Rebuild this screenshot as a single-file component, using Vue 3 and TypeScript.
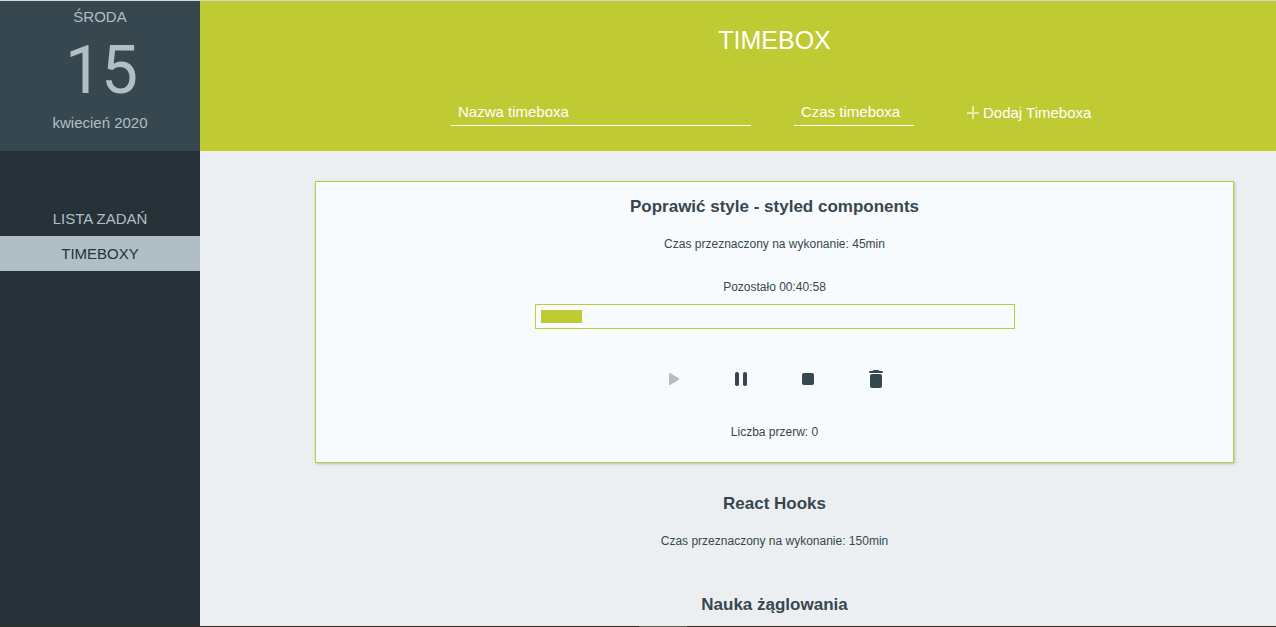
<script setup lang="ts">
interface Timebox {
  title: string
  minutes: number
}

const current: Timebox = { title: 'Poprawić style - styled components', minutes: 45 }
const next: Timebox = { title: 'React Hooks', minutes: 150 }
const later = 'Nauka żąglowania'
const progress = 8.77
</script>

<template>
  <div class="app">
    <div class="body">
      <aside class="sidebar">
        <div class="date">
          <div class="weekday">ŚRODA</div>
          <div class="day">15</div>
          <div class="month">kwiecień 2020</div>
        </div>
        <nav class="menu">
          <a class="item">LISTA ZADAŃ</a>
          <a class="item active">TIMEBOXY</a>
        </nav>
      </aside>
      <main class="main">
        <header class="header">
          <h1>TIMEBOX</h1>
          <form class="form" @submit.prevent>
            <input class="name" placeholder="Nazwa timeboxa" />
            <input class="time" placeholder="Czas timeboxa" />
            <button class="add">
              <svg width="13" height="13" viewBox="0 0 13 13"><path d="M6 0H8V6H13V8H8V13H6V8H1V6H6Z" fill="#fff" fill-opacity=".6" /></svg>
              Dodaj Timeboxa
            </button>
          </form>
        </header>
        <section class="card current">
          <h2>{{ current.title }}</h2>
          <p class="planned">Czas przeznaczony na wykonanie: {{ current.minutes }}min</p>
          <p class="left">Pozostało 00:40:58</p>
          <div class="bar"><div class="fill" :style="{ width: progress + '%' }"></div></div>
          <div class="controls">
            <svg class="off" viewBox="0 0 24 24"><path d="M8 6.800v10.400q0 1.200 1 .7l8.800-5.200q.9-.7 0-1.400L9 6.100Q8 5.600 8 6.800Z" /></svg>
            <svg viewBox="0 0 24 24"><rect x="6" y="5" width="4" height="14" rx="1.800" /><rect x="14" y="5" width="4" height="14" rx="1.800" /></svg>
            <svg viewBox="0 0 24 24"><rect x="6" y="6" width="12" height="12" rx="2" /></svg>
            <svg viewBox="0 0 24 24"><path d="M6 19c0 1.100.9 2 2 2h8c1.100 0 2-.9 2-2V9c0-1.100-.9-2-2-2H8c-1.100 0-2 .9-2 2ZM18 4h-2.500l-.7-.7Q14.500 3 14 3H10q-.5 0-.8.3L8.500 4H6c-1.300 0-1.300 2 0 2h12c1.300 0 1.300-2 0-2Z" /></svg>
          </div>
          <p class="breaks">Liczba przerw: 0</p>
        </section>
        <section class="card">
          <h2>{{ next.title }}</h2>
          <p class="planned">Czas przeznaczony na wykonanie: {{ next.minutes }}min</p>
        </section>
        <section class="card last">
          <h2>{{ later }}</h2>
        </section>
      </main>
    </div>
    <div class="edge"><div class="thumb"></div></div>
  </div>
</template>

<style>
body { margin: 0; overflow: hidden; }
</style>

<style scoped>
* { box-sizing: border-box; }
.app {
  height: 627px;
  border-top: 1px solid #d3d9db;
  background: #eceff1;
  color: #37474f;
  font-family: "Liberation Sans", Arial, sans-serif;
}
.body { display: flex; height: 625px; }
.edge { height: 1px; padding-left: 639px; background: #302b26; }
.thumb { width: 48px; height: 1px; background: #5c5c58; }
.sidebar { width: 200px; background: #263238; color: #b0bec5; text-align: center; }
.date { height: 150px; background: #37474f; }
.weekday { height: 32px; font-size: 15px; line-height: 31px; }
.day { height: 72px; padding-left: 2px; font-family: Roboto, sans-serif; font-size: 66px; letter-spacing: -1px; line-height: 76px; }
.month { font-size: 15px; line-height: 36px; }
.menu { padding-top: 50px; }
.item { display: block; height: 35px; font-size: 15px; line-height: 35px; }
.active { background: #b0bec5; color: #263238; }
.main { flex: 1; }
.header { height: 150px; background: #c0ca33; color: #fff; }
h1 { margin: 0 0 0 73px; padding-top: 24px; text-align: center; font-size: 25px; font-weight: 400; line-height: 30px; }
.form { display: flex; margin: 44px 0 0 251px; height: 27px; }
input { height: 27px; padding: 0 7px 2px; border: 0; border-bottom: 1px solid #fff; border-radius: 0; outline: 0; background: none; font: 15px "Liberation Sans", Arial, sans-serif; }
input::placeholder { color: #fff; opacity: 1; }
.name { width: 300px; }
.time { width: 120px; margin-left: 43px; }
.add { display: flex; align-items: center; gap: 4px; margin-left: 52px; padding: 0; border: 0; background: none; color: #fff; font: 15px "Liberation Sans", Arial, sans-serif; white-space: nowrap; }
.card { width: 919px; height: 101px; margin: 0 0 0 115px; text-align: center; }
.current { height: 282px; margin: 30px 0 16px 115px; border: 1px solid #c0ca33; background: #f7fbfd; box-shadow: 1px 1px 3px #bbb; }
.last { height: 46px; }
h2 { margin: 0; padding-top: 10px; font-size: 17px; line-height: 30px; }
p { margin: 0; font-size: 12px; line-height: 14px; }
.planned { margin-top: 15px; }
.left { margin-top: 29px; }
.bar { width: 480px; height: 25px; margin: 10px auto 0; padding: 5px; border: 1px solid #c0ca33; }
.fill { height: 13px; background: #c0ca33; }
.controls { display: flex; justify-content: center; gap: 43.500px; margin-top: 38px; height: 24px; }
.controls svg { width: 24px; height: 24px; fill: #37474f; }
.controls .off { fill: #b0bec5; }
.breaks { margin-top: 34px; }
</style>
